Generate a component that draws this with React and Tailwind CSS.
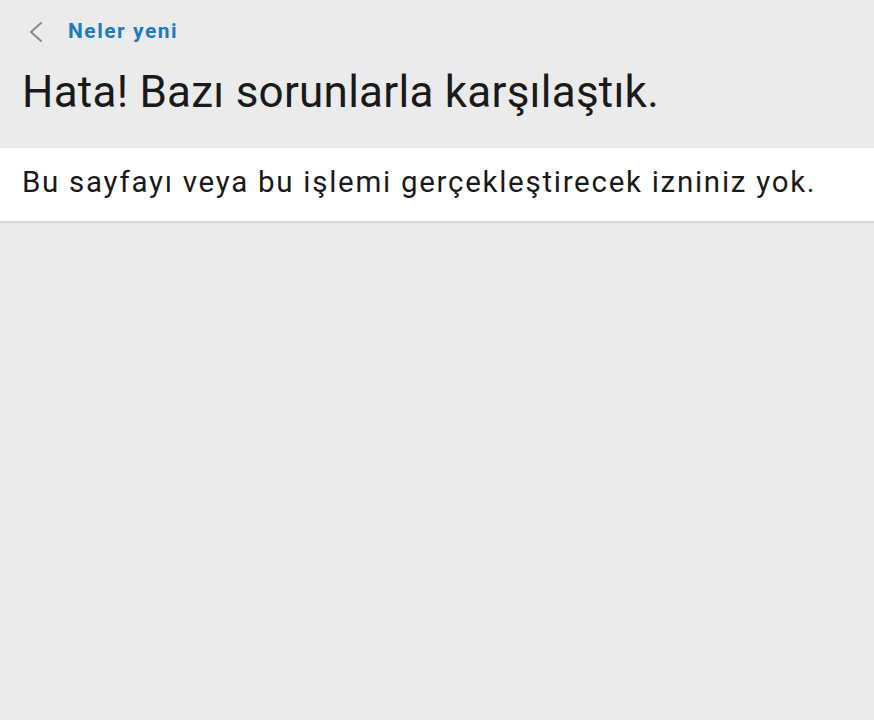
export default function App() {
  return (
    <div className="min-h-[720px] w-full bg-[#ebebeb] font-['Roboto',sans-serif]">
      {/* Header */}
      <div className="flex items-center h-[64px] pl-[24px]">
        <svg width="24" height="24" viewBox="0 0 24 24" className="mr-[20px]">
          <path d="M17 3 L7 12 L17 21" fill="none" stroke="#8a8a8a" strokeWidth="2" strokeLinecap="round" strokeLinejoin="round" />
        </svg>
        <span className="text-[21px] font-bold tracking-[1.5px] text-[#1e7bc0]">Neler yeni</span>
      </div>
      <h1 className="px-[22px] pt-[2px] text-[44px] leading-[52px] tracking-[0.25px] text-[#1a1a1a]">
        Hata! Bazı sorunlarla karşılaştık.
      </h1>
      <div className="mt-[29px] bg-white border-t border-[#dedede] border-b-2 border-b-[#d9d9d9] px-[22px] pb-[4px] h-[76px] flex items-center">
        <p className="text-[29.5px] tracking-[1.72px] text-[#1a1a1a]">Bu sayfayı veya bu işlemi gerçekleştirecek izniniz yok.</p>
      </div>
    </div>
  )
}
